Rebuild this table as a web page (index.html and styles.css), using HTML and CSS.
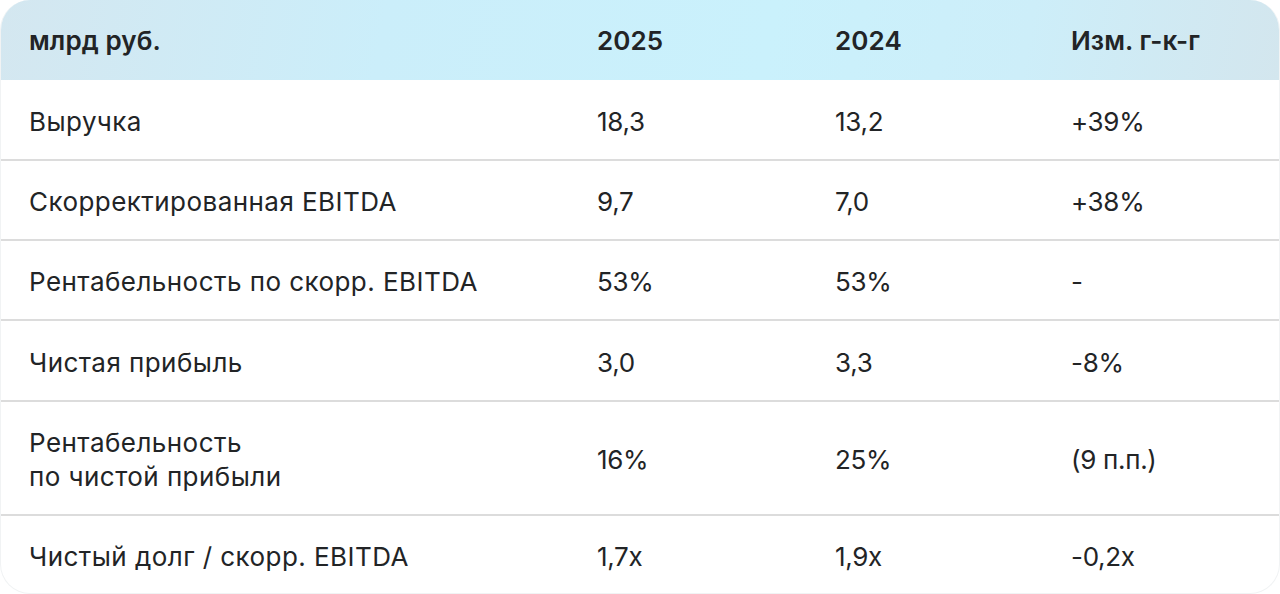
FILE: index.html
```html
<!DOCTYPE html>
<html lang="ru">
<head>
<meta charset="utf-8">
<link rel="stylesheet" href="styles.css">
</head>
<body>
<div class="table">
  <div class="row head">
    <div class="cell">млрд руб.</div>
    <div class="cell">2025</div>
    <div class="cell">2024</div>
    <div class="cell">Изм. г-к-г</div>
  </div>
  <div class="row r1">
    <div class="cell label">Выручка</div>
    <div class="cell num">18,3</div>
    <div class="cell num">13,2</div>
    <div class="cell num">+39%</div>
  </div>
  <div class="row">
    <div class="cell label">Скорректированная EBITDA</div>
    <div class="cell num">9,7</div>
    <div class="cell num">7,0</div>
    <div class="cell num">+38%</div>
  </div>
  <div class="row">
    <div class="cell label">Рентабельность по скорр. EBITDA</div>
    <div class="cell num">53%</div>
    <div class="cell num">53%</div>
    <div class="cell num">-</div>
  </div>
  <div class="row r4">
    <div class="cell label">Чистая прибыль</div>
    <div class="cell num">3,0</div>
    <div class="cell num">3,3</div>
    <div class="cell num">-8%</div>
  </div>
  <div class="row tall">
    <div class="cell label">Рентабельность<br>по чистой прибыли</div>
    <div class="cell num">16%</div>
    <div class="cell num">25%</div>
    <div class="cell num">(9 п.п.)</div>
  </div>
  <div class="row last">
    <div class="cell label">Чистый долг / скорр. EBITDA</div>
    <div class="cell num">1,7x</div>
    <div class="cell num">1,9x</div>
    <div class="cell num">-0,2x</div>
  </div>
</div>
</body>
</html>
```

FILE: styles.css
```css
html, body {
  margin: 0;
  padding: 0;
  background: #ffffff;
}
body {
  font-family: Inter, "Noto Sans", sans-serif;
  color: #222426;
}
.table {
  width: 1280px;
  height: 594px;
  box-sizing: border-box;
  border-radius: 30px;
  border: 1px solid #f1f3f4;
  border-top: none;
  overflow: hidden;
  display: flex;
  flex-direction: column;
}
.row {
  display: grid;
  grid-template-columns: 568px 238px 236px 1fr;
  align-items: center;
  padding-left: 28px;
  padding-top: 3px;
  height: 80px;
  flex: none;
  box-sizing: border-box;
  border-bottom: 2px solid #dcdcdc;
  font-size: 26px;
  letter-spacing: 0.1px;
}
.row.head {
  height: 80px;
  padding-top: 0;
  border-bottom: none;
  font-weight: 600;
  background: linear-gradient(100deg, #d4e7f0 0%, #cbeefa 30%, #caf1fc 60%, #cdeef9 80%, #d3e6ee 100%);
}
.row.r1,
.row.r4 {
  height: 81px;
}
.row.tall {
  height: 114px;
  line-height: 34px;
}
.row.last {
  flex: 1;
  border-bottom: none;
}
.label {
  letter-spacing: 0.45px;
}
.num {
  letter-spacing: -0.3px;
}
```
